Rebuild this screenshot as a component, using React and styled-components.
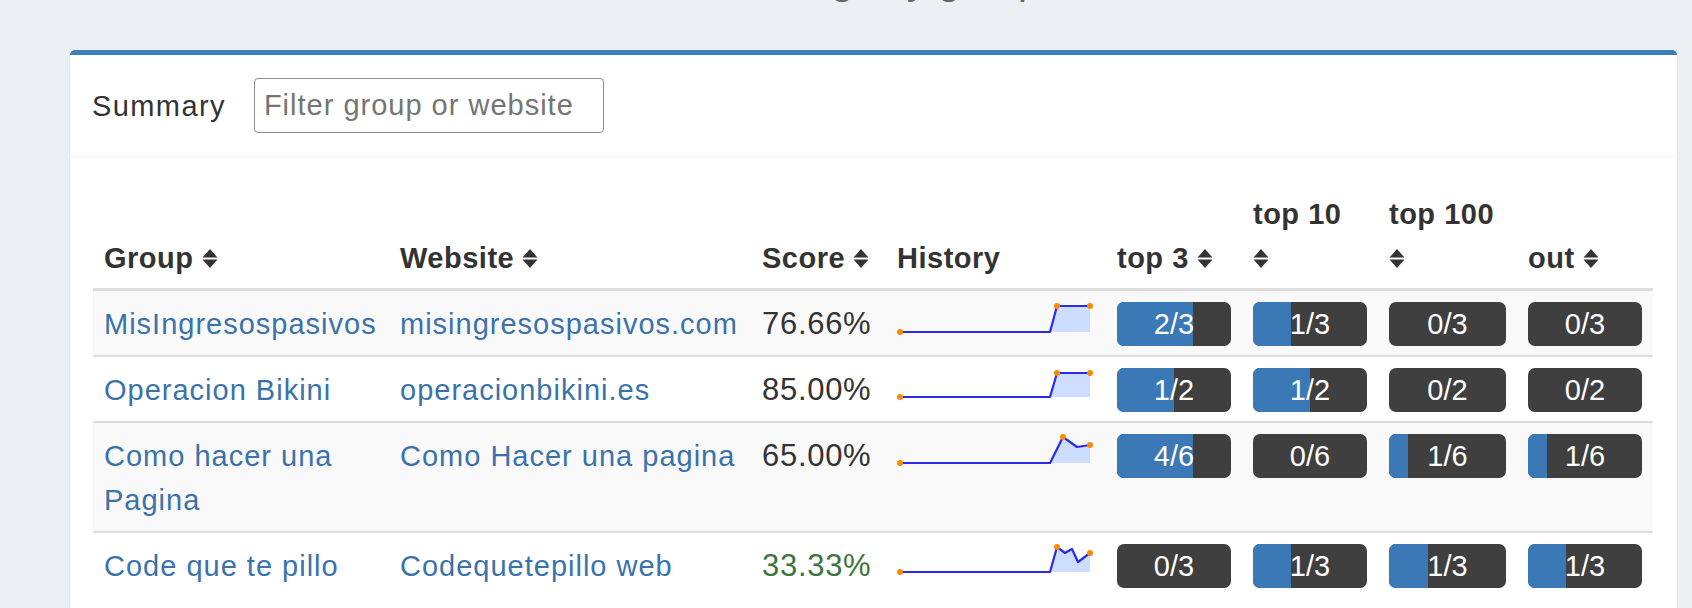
import React from 'react';
import styled, { createGlobalStyle } from 'styled-components';

const GlobalStyle = createGlobalStyle`
  html, body {
    margin: 0;
    padding: 0;
    overflow: hidden;
    background: #ecf0f5;
    font-family: "Liberation Sans", Arial, Helvetica, sans-serif;
    color: #333;
  }
`;

const Page = styled.div`
  padding: 0 15px 0 70px;
`;

const Title = styled.h1`
  margin: -45px 0 45px;
  height: 50px;
  font-size: 40px;
  line-height: 50px;
  font-weight: 400;
  text-align: center;
  color: #666;
`;

const Panel = styled.section`
  background: #fff;
  border-top: 5px solid #3f7fb8;
  border-radius: 5px;
  box-shadow: 0 1px 2px rgba(0, 0, 0, 0.12);
`;

const PanelHeader = styled.div`
  display: flex;
  align-items: center;
  gap: 28px;
  padding: 23px 22px;
  border-bottom: 1px solid #f4f4f4;
`;

const PanelTitle = styled.span`
  font-size: 29px;
  line-height: 44px;
  letter-spacing: 1.4px;
  color: #333;
`;

const FilterInput = styled.input`
  box-sizing: border-box;
  width: 350px;
  height: 55px;
  padding: 0 9px;
  border: 1px solid #8c8c8c;
  border-radius: 4px;
  font-family: inherit;
  font-size: 29px;
  letter-spacing: 1px;
  color: #333;
  outline: none;
  &::placeholder {
    color: #757575;
  }
`;

const PanelBody = styled.div`
  padding: 25px 24px 24px 23px;
`;

const Table = styled.table`
  width: 100%;
  border-collapse: collapse;
  table-layout: fixed;

  tbody tr:nth-child(odd) {
    background: #f9f9f9;
  }
`;

const Th = styled.th`
  padding: 10px 11px 8px;
  text-align: left;
  vertical-align: bottom;
  font-size: 29px;
  line-height: 44px;
  font-weight: 700;
  letter-spacing: 0.5px;
  color: #333;
  border-bottom: 3px solid #ddd;
`;

const Td = styled.td`
  padding: 11px 11px 9px;
  vertical-align: top;
  font-size: 29px;
  line-height: 44px;
  border-top: 2px solid #ddd;
  white-space: ${(p) => (p.$nowrap ? 'nowrap' : 'normal')};
`;

const Link = styled.a`
  color: #3a72ab;
  letter-spacing: 1px;
  text-decoration: none;
`;

const Score = styled.span`
  font-size: 31px;
  letter-spacing: 0.7px;
  color: ${(p) => (p.$good ? '#3c763d' : '#333')};
`;

const SortSvg = styled.svg`
  width: 16px;
  height: 21px;
  margin-left: ${(p) => (p.$stacked ? '0' : '8px')};
  vertical-align: -1px;
`;

const SparkSvg = styled.svg`
  display: block;
  width: 197px;
  height: 34px;
  overflow: visible;
`;

const Progress = styled.div`
  position: relative;
  height: 44px;
  border-radius: 7px;
  background: #3f3f3f;
  overflow: hidden;
`;

const ProgressFill = styled.div`
  height: 100%;
  background: #3a78b6;
`;

const ProgressLabel = styled.span`
  position: absolute;
  inset: 0;
  text-align: center;
  color: #fff;
  font-size: 29px;
  line-height: 44px;
`;

const SortIcon = ({ stacked }) => (
  <SortSvg $stacked={stacked} viewBox="0 0 16 21">
    <polygon points="0.5,9.6 8,1 15.5,9.6" fill="#333" />
    <polygon points="0.5,11.4 8,20 15.5,11.4" fill="#333" />
  </SortSvg>
);

const Sparkline = ({ points, low }) => {
  const line = points.map(([x, y]) => `${x},${y}`).join(' ');
  const first = points[0];
  const last = points[points.length - 1];
  const area = `${line} ${last[0]},${low} ${first[0]},${low}`;
  const top = Math.min(...points.map((p) => p[1]));
  const peak = points.find(([, y]) => y === top);
  const spots = [first, peak, last];
  return (
    <SparkSvg viewBox="0 0 197 34">
      <polygon points={area} fill="#cdf" />
      <polyline points={line} fill="none" stroke="#2a2aee" strokeWidth="2.2" strokeLinejoin="round" />
      {spots.map(([x, y], i) => (
        <circle key={i} cx={x} cy={y} r="3" fill="#f80" />
      ))}
    </SparkSvg>
  );
};

const RankBar = ({ hit, total }) => (
  <Progress>
    <ProgressFill style={{ width: `${(hit / total) * 100}%` }} />
    <ProgressLabel>
      {hit}/{total}
    </ProgressLabel>
  </Progress>
);

const columns = [
  { label: 'Group', width: 296, sort: true },
  { label: 'Website', width: 362, sort: true },
  { label: 'Score', width: 135, sort: true },
  { label: 'History', width: 220 },
  { label: 'top 3', width: 136, sort: true },
  { label: 'top 10', width: 136, sort: true, stacked: true },
  { label: 'top 100', width: 139, sort: true, stacked: true },
  { label: 'out', width: 136, sort: true },
];

const rows = [
  {
    group: 'MisIngresospasivos',
    site: 'misingresospasivos.com',
    score: '76.66%',
    spark: [[3, 30], [153, 30], [160, 4], [193, 4]],
    low: 30,
    ranks: [[2, 3], [1, 3], [0, 3], [0, 3]],
  },
  {
    group: 'Operacion Bikini',
    site: 'operacionbikini.es',
    score: '85.00%',
    spark: [[3, 29], [153, 29], [160, 5], [193, 5]],
    low: 29,
    ranks: [[1, 2], [1, 2], [0, 2], [0, 2]],
  },
  {
    group: 'Como hacer una Pagina',
    site: 'Como Hacer una pagina',
    score: '65.00%',
    spark: [[3, 29], [153, 29], [166, 3], [180, 13], [193, 11]],
    low: 29,
    ranks: [[4, 6], [0, 6], [1, 6], [1, 6]],
  },
  {
    group: 'Code que te pillo',
    site: 'Codequetepillo web',
    score: '33.33%',
    good: true,
    spark: [[3, 28], [153, 28], [160, 3], [168, 9], [175, 5], [181, 18], [193, 9]],
    low: 28,
    ranks: [[0, 3], [1, 3], [1, 3], [1, 3]],
  },
];

export default function App() {
  return (
    <Page>
      <GlobalStyle />
      <Title>Rankings by group</Title>
      <Panel>
        <PanelHeader>
          <PanelTitle>Summary</PanelTitle>
          <FilterInput placeholder="Filter group or website" />
        </PanelHeader>
        <PanelBody>
          <Table>
            <colgroup>
              {columns.map((c) => (
                <col key={c.label} style={{ width: c.width }} />
              ))}
            </colgroup>
            <thead>
              <tr>
                {columns.map((c) => (
                  <Th key={c.label}>
                    {c.label}
                    {c.stacked && <br />}
                    {c.sort && <SortIcon stacked={c.stacked} />}
                  </Th>
                ))}
              </tr>
            </thead>
            <tbody>
              {rows.map((r) => (
                <tr key={r.group}>
                  <Td>
                    <Link href="#">{r.group}</Link>
                  </Td>
                  <Td $nowrap>
                    <Link href="#">{r.site}</Link>
                  </Td>
                  <Td>
                    <Score $good={r.good}>{r.score}</Score>
                  </Td>
                  <Td>
                    <Sparkline points={r.spark} low={r.low} />
                  </Td>
                  {r.ranks.map(([hit, total], i) => (
                    <Td key={i}>
                      <RankBar hit={hit} total={total} />
                    </Td>
                  ))}
                </tr>
              ))}
            </tbody>
          </Table>
        </PanelBody>
      </Panel>
    </Page>
  );
}
